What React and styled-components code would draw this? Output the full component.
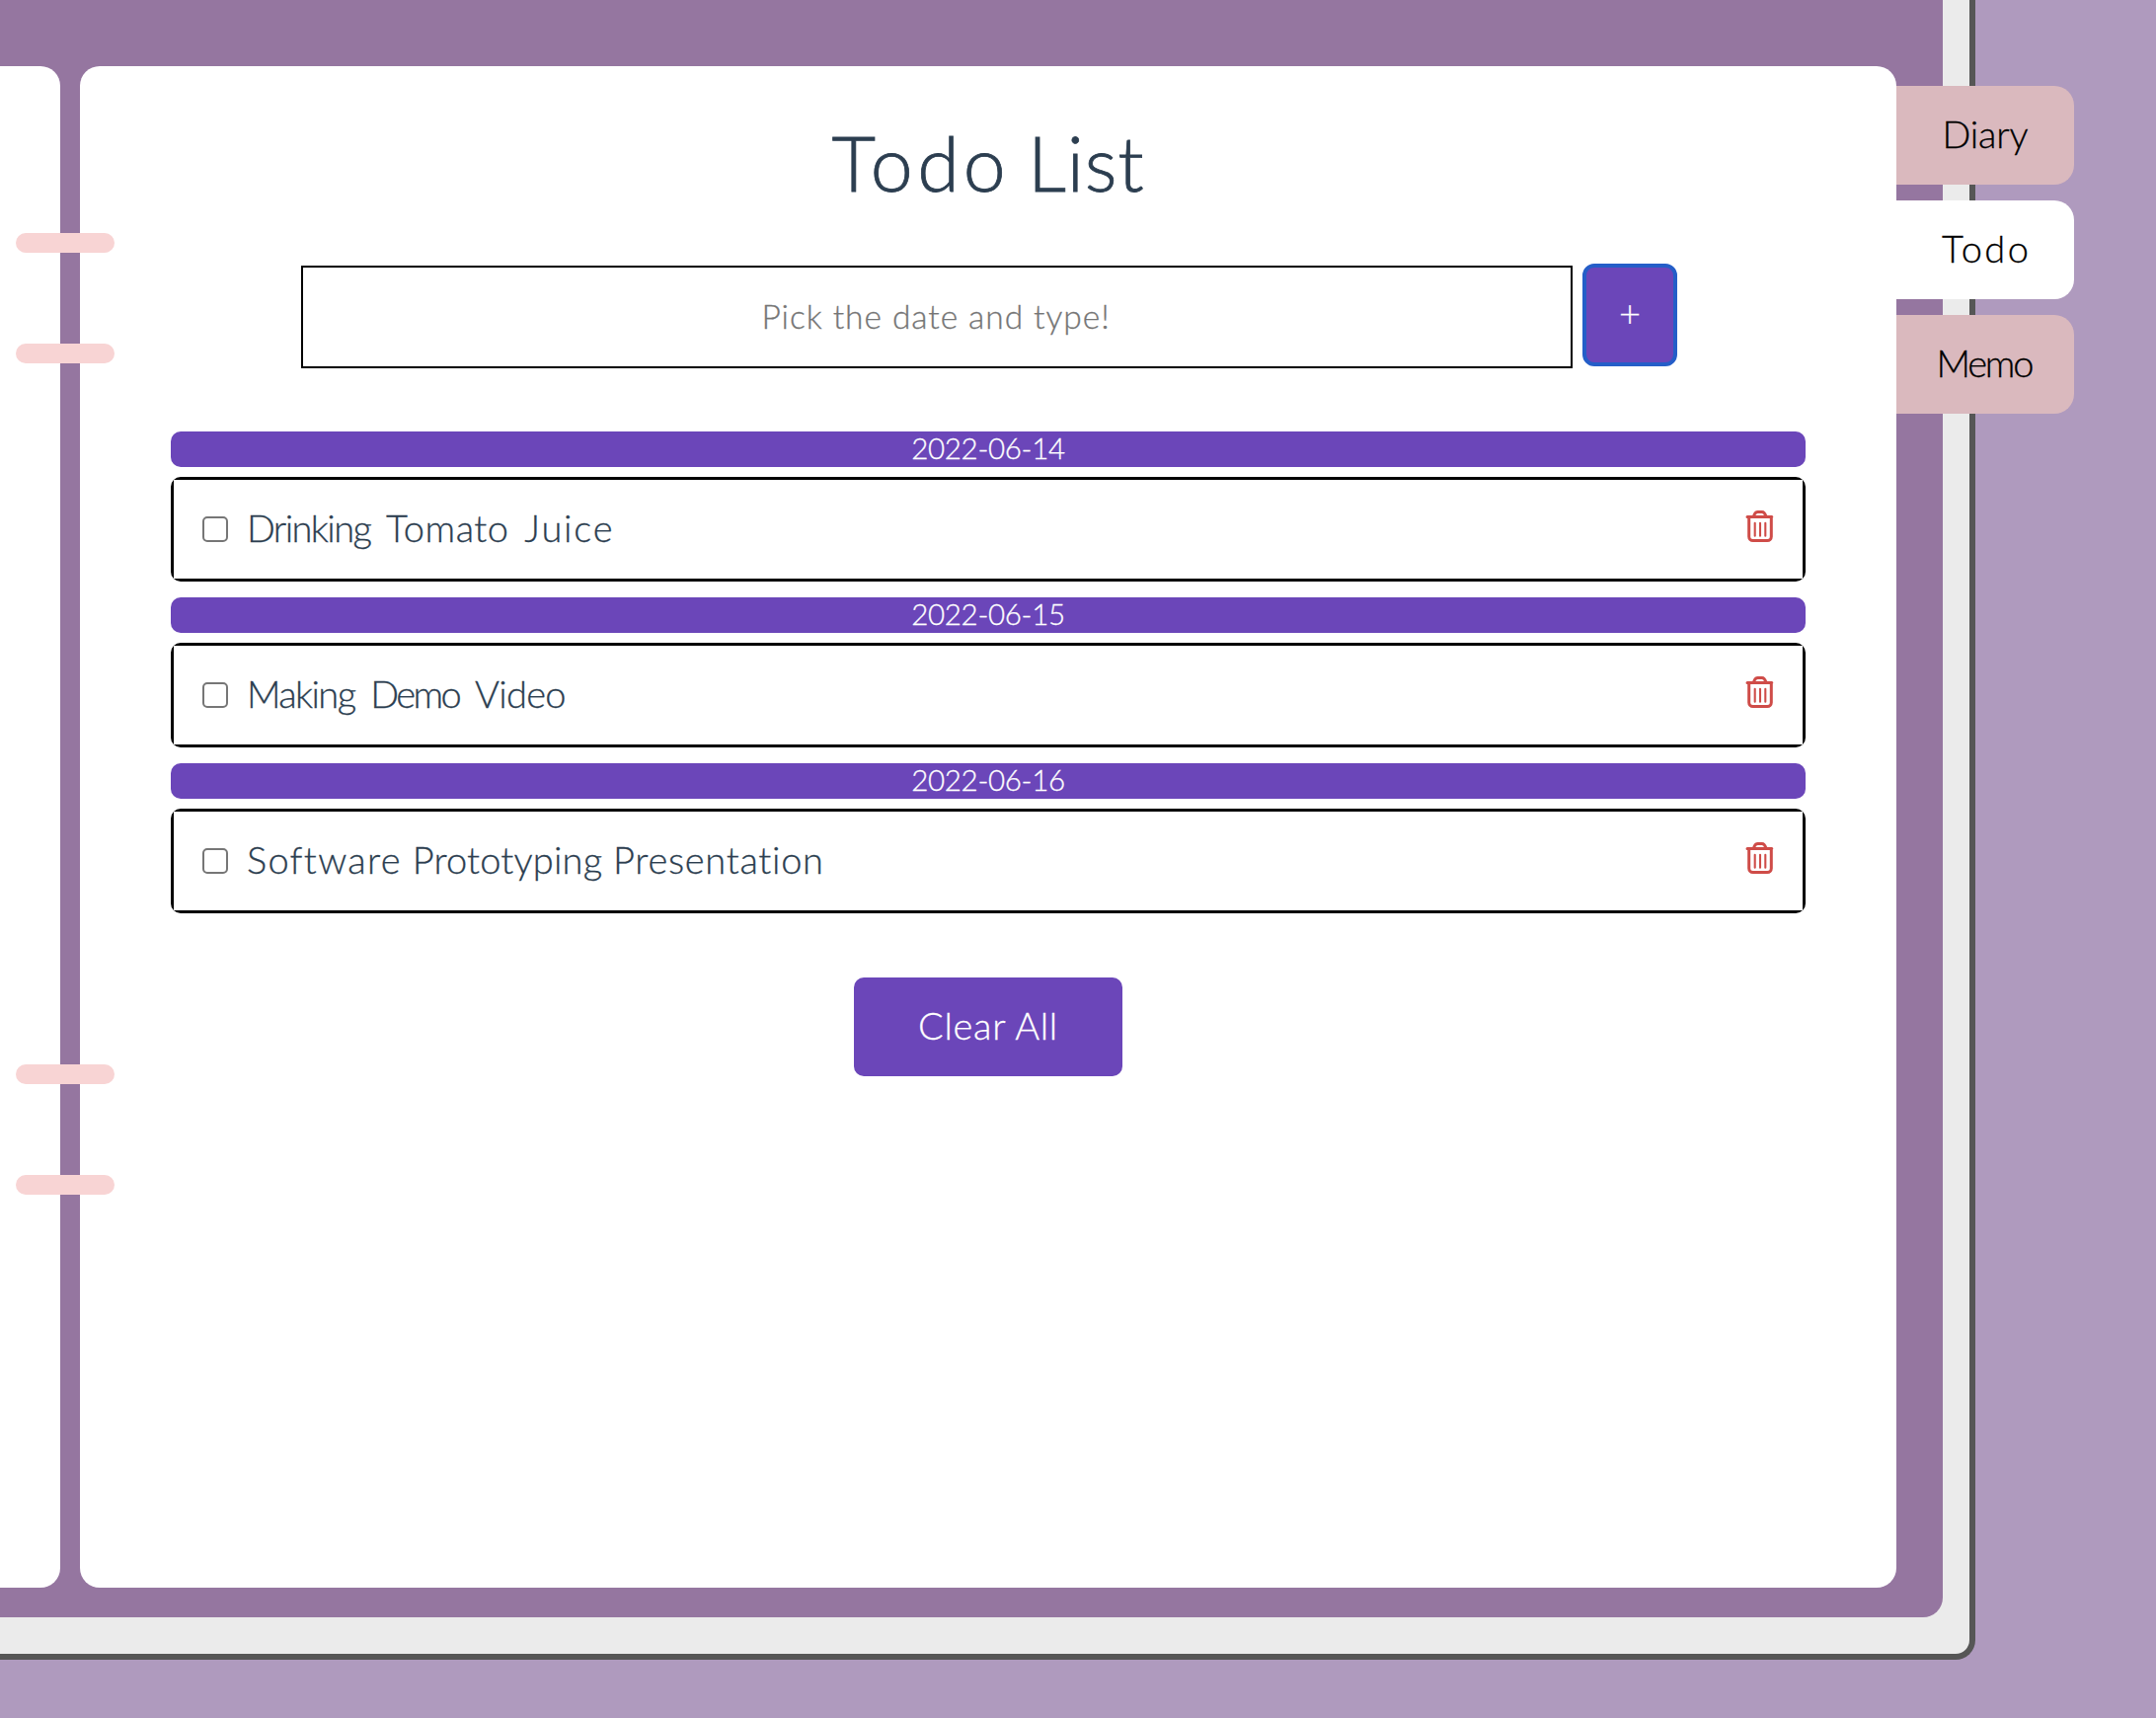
import React, { Fragment } from "react";
import styled, { createGlobalStyle } from "styled-components";

const GlobalStyle = createGlobalStyle`
  *, *::before, *::after { box-sizing: border-box; }
  body {
    margin: 0;
    background: #af9abe;
    font-family: Lato, "Liberation Sans", sans-serif;
    font-weight: 300;
    font-size: 38px;
    color: #2c3e50;
    -webkit-text-stroke: 0.3px;
  }
`;

const Screen = styled.div`
  width: 2184px;
  height: 1740px;
  overflow: hidden;
  background: #af9abe;
`;

const Book = styled.div`
  width: 2001px;
  height: 1681px;
  padding: 0 27px 37px 0;
  background: #ebebeb;
  border: solid #565656;
  border-width: 0 6px 6px 0;
  border-radius: 0 0 20px 0;
`;

const Cover = styled.div`
  display: flex;
  gap: 20px;
  height: 100%;
  padding: 67px 47px 30px 0;
  background: #9576a0;
  border-radius: 0 0 20px 0;
`;

const LeftPage = styled.section`
  flex: 0 0 61px;
  background: #fff;
  border-radius: 0 20px 20px 0;
`;

const RightPage = styled.main`
  position: relative;
  flex: 1;
  display: flex;
  flex-direction: column;
  align-items: center;
  padding: 49px 92px 0;
  background: #fff;
  border-radius: 20px;
`;

const Rings = styled.div`
  position: absolute;
  left: -65px;
  top: ${(p) => p.$top}px;
  display: grid;
  gap: 92px;
`;

const Ring = styled.span`
  width: 100px;
  height: 20px;
  border-radius: 10px;
  background: #f8d4d4;
`;

const Tabs = styled.nav`
  position: absolute;
  left: 100%;
  top: 20px;
  display: flex;
  flex-direction: column;
  gap: 16px;
`;

const Tab = styled.a`
  display: flex;
  align-items: center;
  justify-content: center;
  width: 180px;
  height: 100px;
  padding-bottom: 4px;
  border-radius: 0 20px 20px 0;
  background: ${(p) => (p.$active ? "#fff" : "#dab9be")};
  color: #000;
  letter-spacing: ${(p) => p.$spacing}px;
  text-indent: ${(p) => p.$spacing}px;
`;

const Word = styled.span`
  letter-spacing: ${(p) => p.$spacing}px;
`;

const Title = styled.h1`
  margin: 0 0 57px;
  line-height: 96px;
  font-size: 77px;
  font-weight: 300;
  word-spacing: -3px;
  color: #2c3e50;
  -webkit-text-stroke: 0.8px #2c3e50;
`;

const Form = styled.form`
  display: flex;
  gap: 10px;
  width: 1394px;
  margin: 0 0 64px 2px;
`;

const TextInput = styled.input`
  width: 1288px;
  height: 104px;
  padding: 0 2px 2px 0;
  border: 2px solid #000;
  border-radius: 0;
  outline: none;
  background: #fff;
  text-align: center;
  font: 300 33.5px Lato, "Liberation Sans", sans-serif;
  letter-spacing: 0.95px;

  &::placeholder { color: #757575; opacity: 1; }
`;

const AddButton = styled.button`
  width: 96px;
  height: 104px;
  margin-top: -2px;
  padding: 0 0 6px;
  border: 4px solid #255ec8;
  border-radius: 12px;
  background: #6b46b9;
  color: #fff;
  font: 300 38px Lato, "Liberation Sans", sans-serif;
`;

const List = styled.ul`
  display: flex;
  flex-direction: column;
  gap: 16px;
  width: 100%;
  margin: 0;
  padding: 0;
  list-style: none;
`;

const DateBar = styled.div`
  height: 36px;
  margin-bottom: 10px;
  border-radius: 10px;
  background: #6b46b9;
  color: #fff;
  text-align: center;
  font-size: 29.5px;
  line-height: 34px;
  letter-spacing: -0.3px;
`;

const Frame = styled.div`
  padding: 3px;
  border-radius: 10px;
  background: #000;
`;

const Item = styled.div`
  display: flex;
  align-items: center;
  height: 100px;
  padding: 0 28px 0 29px;
  background: #fff;
`;

const Checkbox = styled.input`
  appearance: none;
  flex: none;
  width: 26px;
  height: 26px;
  margin: 0 19px 0 0;
  border: 2px solid #767676;
  border-radius: 5px;
  background: #fff;
`;

const Label = styled.label`
  flex: 1;
  padding-bottom: 4px;
  line-height: 46px;
  white-space: nowrap;
  word-spacing: ${(p) => p.$gap}px;
`;

const TrashSvg = styled.svg`
  flex: none;
  width: 30px;
  height: 34px;
  margin-bottom: 6px;
  fill: none;
  stroke: #cf4c48;
  stroke-linecap: round;
  stroke-linejoin: round;
`;

const ClearButton = styled.button`
  width: 272px;
  height: 100px;
  margin-top: 65px;
  padding: 0 0 5px;
  border: 0;
  border-radius: 10px;
  background: #6b46b9;
  color: #fff;
  font: 300 38px Lato, "Liberation Sans", sans-serif;
  letter-spacing: 0.7px;
`;

const Trash = () => (
  <TrashSvg viewBox="0 0 30 34">
    <path strokeWidth="3" d="M2 7.500h24.800M3.700 8v19.500a4 4 0 0 0 4 4h14.600a4 4 0 0 0 4-4V8M8.500 7c1-3.400 2-4.500 4-4.500h4.400c2 0 3 1.100 4 4.500" />
    <path strokeWidth="2.1" d="M9.700 13.800v13M15 13.800v13M20.300 13.800v13" />
  </TrashSvg>
);

// Each word carries its own tracking: [text, letter spacing in px].
const Words = ({ items }) =>
  items.map(([text, spacing], i) => (
    <Fragment key={text}>
      {i > 0 && " "}
      <Word $spacing={spacing}>{text}</Word>
    </Fragment>
  ));

const tabs = [
  { name: "Diary", spacing: -0.2 },
  { name: "Todo", spacing: 2.4, active: true },
  { name: "Memo", spacing: -2.2 },
];

const todos = [
  { date: "2022-06-14", gap: 5.5, words: [["Drinking", -1.6], ["Tomato", 0.5], ["Juice", 1.8]] },
  { date: "2022-06-15", gap: 5.5, words: [["Making", -1.6], ["Demo", -2.6], ["Video", -0.7]] },
  { date: "2022-06-16", gap: 0.5, words: [["Software", 1.3], ["Prototyping", 0.2], ["Presentation", 0.7]] },
];

export default function App() {
  return (
    <Screen>
      <GlobalStyle />
      <Book>
        <Cover>
          <LeftPage />
          <RightPage>
            <Title><Words items={[["Todo", 4.3], ["List", 0.8]]} /></Title>
            <Form>
              <TextInput placeholder="Pick the date and type!" />
              <AddButton type="button">+</AddButton>
            </Form>
            <List>
              {todos.map((todo) => (
                <li key={todo.date}>
                  <DateBar>{todo.date}</DateBar>
                  <Frame>
                    <Item>
                      <Checkbox type="checkbox" id={todo.date} />
                      <Label htmlFor={todo.date} $gap={todo.gap}><Words items={todo.words} /></Label>
                      <Trash />
                    </Item>
                  </Frame>
                </li>
              ))}
            </List>
            <ClearButton type="button">Clear All</ClearButton>
            <Rings $top={169}><Ring /><Ring /></Rings>
            <Rings $top={1011}><Ring /><Ring /></Rings>
            <Tabs>
              {tabs.map((tab) => (
                <Tab key={tab.name} $active={tab.active} $spacing={tab.spacing}>{tab.name}</Tab>
              ))}
            </Tabs>
          </RightPage>
        </Cover>
      </Book>
    </Screen>
  );
}
